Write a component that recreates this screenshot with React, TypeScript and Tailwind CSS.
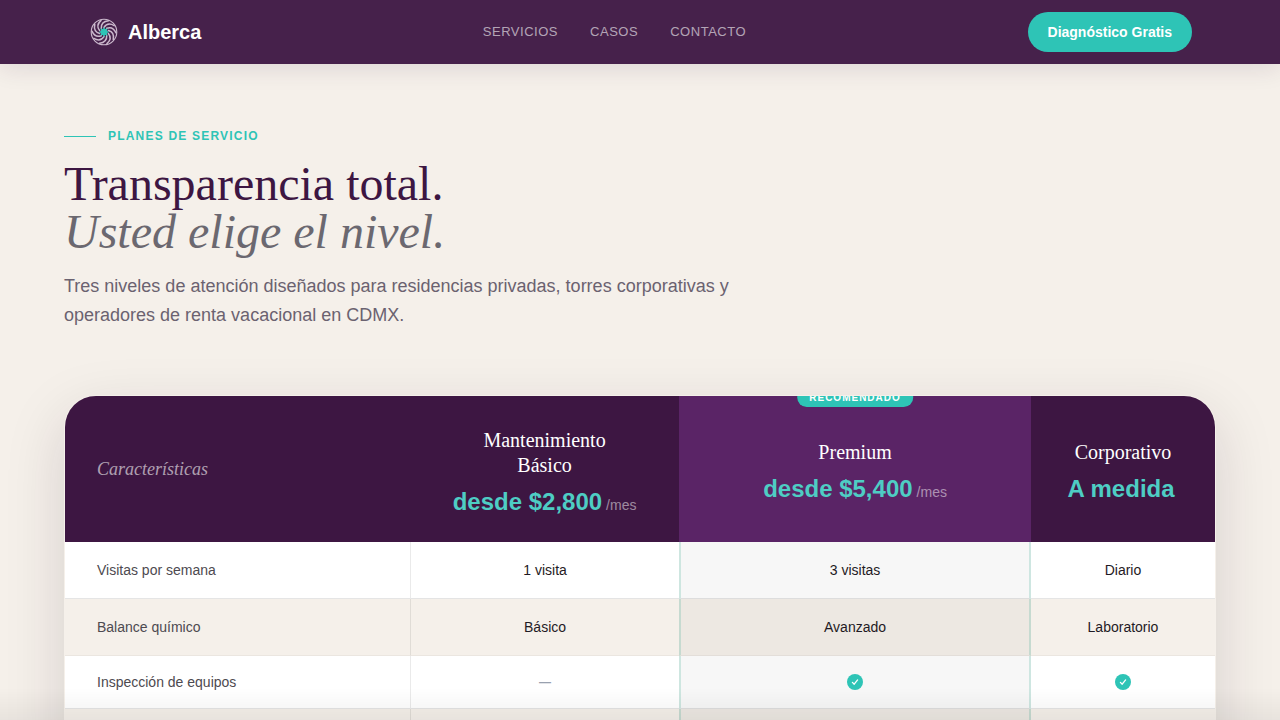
import * as React from 'react';
import { ReactNode } from 'react';

type Row = {
  feature: string;
  basic: ReactNode;
  premium: ReactNode;
  corporate: ReactNode;
  icons?: boolean;
};

const LINKS = [
  { href: '#servicios', label: 'Servicios' },
  { href: '#casos', label: 'Casos' },
  { href: '#contacto', label: 'Contacto' },
];

const ARMS = Array.from({ length: 10 }, (_, i) => i * 36);
const RAYS = Array.from({ length: 8 }, (_, i) => i * 45);

function Logo() {
  return (
    <svg viewBox="0 0 32 32" className="h-8 w-8" fill="none" aria-hidden="true">
      <circle cx="16" cy="16" r="12.8" stroke="#cbb9cd" strokeWidth="1.1" />
      {ARMS.map((deg) => (
        <path
          key={deg}
          d="M16 11.4C18.2 8 22 7.2 26.2 9.6"
          stroke="#cbb9cd"
          strokeWidth="1.5"
          strokeLinecap="round"
          transform={`rotate(${deg} 16 16)`}
        />
      ))}
      {RAYS.map((deg) => (
        <path
          key={deg}
          d="M16 16L14.7 13.4L16 10.8L17.3 13.4Z"
          fill="#2ec4b6"
          transform={`rotate(${deg} 16 16)`}
        />
      ))}
      <circle cx="16" cy="16" r="3" fill="#2ec4b6" />
    </svg>
  );
}

function Check() {
  return (
    <svg viewBox="0 0 16 16" className="mx-auto h-4 w-4" role="img" aria-label="Incluido">
      <circle cx="8" cy="8" r="8" fill="#2ec4b6" />
      <path
        d="M5.4 8.4L7.2 10.2L10.6 5.9"
        fill="none"
        stroke="#fff"
        strokeWidth="1.3"
        strokeLinecap="round"
        strokeLinejoin="round"
      />
    </svg>
  );
}

const Dash = () => <span className="block text-xs leading-5 font-bold text-gray-400">—</span>;

const ROWS: Row[] = [
  { feature: 'Visitas por semana', basic: '1 visita', premium: '3 visitas', corporate: 'Diario' },
  { feature: 'Balance químico', basic: 'Básico', premium: 'Avanzado', corporate: 'Laboratorio' },
  { feature: 'Inspección de equipos', basic: <Dash />, premium: <Check />, corporate: <Check />, icons: true },
  { feature: 'Tiempo de respuesta', basic: '48 h', premium: '24 h', corporate: 'Inmediato' },
];

function Plan({ name, price, per }: { name: string; price: string; per?: string }) {
  return (
    <>
      <div className="mx-auto max-w-40 font-['Liberation_Serif',serif] text-xl leading-[25px] text-white">{name}</div>
      <div className="mt-2 text-2xl leading-8 font-bold text-[#4ecdc4]">
        {price}
        <span className="ml-1 text-sm font-normal text-white/50">{per}</span>
      </div>
    </>
  );
}

export default function App() {
  return (
    <div className="min-h-screen bg-[#f5f0ea] font-['Liberation_Sans',Arial,sans-serif] text-[#1f1a24]">
      <header className="sticky top-0 z-20 bg-[#46214b] shadow-[0_4px_24px_rgba(61,21,66,0.12)]">
        <div className="mx-auto flex h-16 max-w-6xl items-center justify-between px-6">
          <a href="#" className="flex items-center gap-2 text-xl font-bold text-white">
            <Logo />
            Alberca
          </a>
          <nav className="flex gap-8">
            {LINKS.map((l) => (
              <a key={l.href} href={l.href} className="text-[13px] tracking-[0.04em] text-white/60 uppercase">
                {l.label}
              </a>
            ))}
          </nav>
          <button type="button" className="h-10 rounded-full bg-[#2ec4b6] px-5 text-sm font-bold text-white">
            Diagnóstico Gratis
          </button>
        </div>
      </header>

      <main className="px-16 pt-16 pb-24">
        <div className="mx-auto max-w-6xl">
          <div className="flex items-center gap-3">
            <span className="h-px w-8 bg-[#2ec4b6]" />
            <span className="text-xs font-bold tracking-widest text-[#2ec4b6] uppercase">Planes de servicio</span>
          </div>
          <h1 className="mt-4 font-['Liberation_Serif',serif] text-5xl leading-[48px] text-[#3d1642]">
            Transparencia total.
            <br />
            <em className="text-[#6b6870]">Usted elige el nivel.</em>
          </h1>
          <p className="mt-4 max-w-2xl text-lg leading-[29px] text-[#6b6270]">
            Tres niveles de atención diseñados para residencias privadas, torres corporativas y operadores de renta
            vacacional en CDMX.
          </p>

          <div className="mt-[65px] overflow-hidden rounded-[32px] border border-transparent shadow-[0_20px_60px_rgba(40,22,42,0.15)]">
            <table className="w-full table-fixed border-separate border-spacing-0 text-center text-sm">
              <colgroup>
                <col className="w-[30%]" />
                <col className="w-[23.4%]" />
                <col className="w-[30.6%]" />
                <col className="w-[16%]" />
              </colgroup>
              <thead className="bg-[#3d1642]">
                <tr>
                  <th
                    scope="col"
                    className="px-8 py-6 text-left font-['Liberation_Serif',serif] text-lg font-normal text-white/60 italic"
                  >
                    Características
                  </th>
                  <th scope="col" className="px-8 pt-8 pb-6 font-normal">
                    <Plan name="Mantenimiento Básico" price="desde $2,800" per="/mes" />
                  </th>
                  <th scope="col" className="relative bg-[#5a2466] px-8 py-6 font-normal">
                    <span className="absolute -top-2 left-1/2 -translate-x-1/2 rounded-full bg-[#2ec4b6] px-3 py-1 text-[10px] leading-[11px] font-bold tracking-widest text-white uppercase">
                      Recomendado
                    </span>
                    <div className="pt-1.5">
                      <Plan name="Premium" price="desde $5,400" per="/mes" />
                    </div>
                  </th>
                  <th scope="col" className="px-8 py-6 font-normal">
                    <div className="pt-1.5">
                      <Plan name="Corporativo" price="A medida" />
                    </div>
                  </th>
                </tr>
              </thead>
              <tbody>
                {ROWS.map((r) => (
                  <tr
                    key={r.feature}
                    className="odd:bg-white even:bg-[#f5f0ea] [&>*]:border-b odd:[&>*]:border-b-black/10 even:[&>*]:border-b-black/4"
                  >
                    <th
                      scope="row"
                      className={`px-8 text-left font-normal text-[#4d4a50] ${r.icons ? 'py-4' : 'py-[18px]'}`}
                    >
                      {r.feature}
                    </th>
                    <td className="border-l border-l-black/8">{r.basic}</td>
                    <td className="border-x-2 border-x-[#2ea48a]/20 bg-black/3">{r.premium}</td>
                    <td>{r.corporate}</td>
                  </tr>
                ))}
              </tbody>
            </table>
          </div>
        </div>
      </main>

      {/* soft edge above the bottom of the window */}
      <div className="pointer-events-none fixed inset-x-0 bottom-0 h-8 bg-linear-to-t from-black/5 to-transparent" />
    </div>
  );
}
